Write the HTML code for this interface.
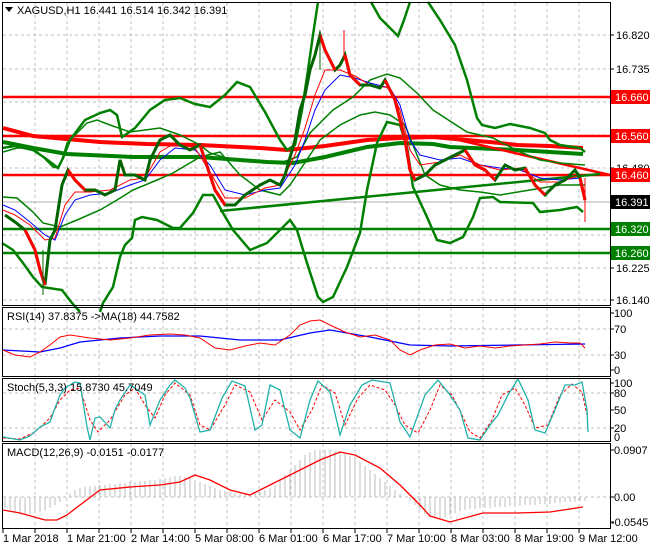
<!DOCTYPE html>
<html><head><meta charset="utf-8"><style>
html,body{margin:0;padding:0;background:#fff;width:650px;height:550px;overflow:hidden}
svg{display:block;font-family:"Liberation Sans",sans-serif;font-size:11px}
</style></head><body>
<svg width="650" height="550" viewBox="0 0 650 550" xmlns="http://www.w3.org/2000/svg">
<rect width="650" height="550" fill="#fff"/>
<!-- grids -->
<g stroke="#c0c0c0" stroke-dasharray="3,3" stroke-width="1">
<path d="M35 3V305M67 3V305M99 3V305M131 3V305M163 3V305M195 3V305M227 3V305M259 3V305M291 3V305M323 3V305M355 3V305M387 3V305M419 3V305M451 3V305M483 3V305M515 3V305M547 3V305M579 3V305"/>
<path d="M3 35H610M3 69H610M3 102H610M3 135H610M3 168H610M3 235H610M3 268H610M3 300H610"/>
<path d="M35 308V376M67 308V376M99 308V376M131 308V376M163 308V376M195 308V376M227 308V376M259 308V376M291 308V376M323 308V376M355 308V376M387 308V376M419 308V376M451 308V376M483 308V376M515 308V376M547 308V376M579 308V376M3 329H610M3 355H610"/>
<path d="M35 379V441M67 379V441M99 379V441M131 379V441M163 379V441M195 379V441M227 379V441M259 379V441M291 379V441M323 379V441M355 379V441M387 379V441M419 379V441M451 379V441M483 379V441M515 379V441M547 379V441M579 379V441M3 393H610M3 428H610"/>
<path d="M35 444V528M67 444V528M99 444V528M131 444V528M163 444V528M195 444V528M227 444V528M259 444V528M291 444V528M323 444V528M355 444V528M387 444V528M419 444V528M451 444V528M483 444V528M515 444V528M547 444V528M579 444V528M3 497H610"/>
</g>
<line x1="3" y1="202" x2="610" y2="202" stroke="#b0b0b0"/>
<!-- horizontal levels -->
<g stroke-width="2.5">
<line x1="3" y1="97" x2="610" y2="97" stroke="#ff0000"/>
<line x1="3" y1="136" x2="610" y2="136" stroke="#ff0000"/>
<line x1="3" y1="175" x2="610" y2="175" stroke="#ff0000"/>
<line x1="3" y1="229" x2="610" y2="229" stroke="#008000"/>
<line x1="3" y1="253" x2="610" y2="253" stroke="#008000"/>
</g>
<!-- thick MAs -->
<polyline fill="none" stroke="#ff0000" stroke-width="4" points="3,128 33,136 100,142 147,144 200,145 260,148 287,150 325,146 367,140 400,138 433,137 467,140 500,143 517,145 550,146 583,148"/>
<polyline fill="none" stroke="#008000" stroke-width="4" points="3,142 33,148 67,154 133,157 200,157 267,162 293,163 325,157 367,147 400,143 433,144 450,147 517,150 583,154"/>
<!-- trend lines -->
<line x1="450" y1="138" x2="610" y2="175" stroke="#ff0000" stroke-width="2.5"/>
<line x1="220" y1="211" x2="600" y2="174" stroke="#008000" stroke-width="2.5"/>
<!-- bollinger wide -->
<g fill="none" stroke="#008000" stroke-width="2.5">
<polyline points="2,148 15,146 33,150 45,158 58,168 63,158 70,140 85,120 100,113 110,110 117,115 122,137 128,133 135,128 150,110 165,100 180,98 195,104 210,107 225,95 237,82 250,87 265,112 280,140 287,150 295,145 302,110 308,70 313,35 318,2"/>
<polyline points="371,2 380,18 392,30 398,36 404,20 410,2"/>
<polyline points="428,2 440,20 455,45 467,80 477,118 482,125 495,128 510,124 530,128 545,133 550,140 560,145 580,148 585,152"/>
<polyline points="2,243 13,250 23,263 33,277 42,287 62,290 72,303 80,312"/>
<polyline points="100,312 103,303 113,287 120,257 125,245 132,238 135,220 142,217 157,220 173,228 180,228 193,213 203,195 213,195 223,213 233,230 250,250 267,243 290,220 297,230 307,263 318,297 323,302 333,297 347,267 360,233 367,190 377,143 387,122 400,125 407,147 413,187 427,217 437,240 450,243 463,237 473,217 480,198 493,197 500,202 533,203 540,212 560,210 577,207 583,212"/>
</g>
<!-- bollinger narrow -->
<g fill="none" stroke="#008000" stroke-width="1.5">
<polyline points="3,152 17,148 33,148 43,157 53,167 58,168 62,160 67,143 77,133 87,123 97,120 110,125 130,132 160,128 180,135 200,145 210,153 233,160 280,163 297,157 310,133 333,110 353,97 370,80 387,74 400,78 417,93 433,110 453,123 467,132 493,138 520,152 540,160 560,163 585,165"/>
<polyline points="3,197 17,198 33,212 43,223 60,227 77,220 100,210 117,200 133,190 157,180 173,173 200,157 220,152 240,175 260,190 280,195 290,185 300,170 320,140 340,125 360,115 375,112 390,115 405,125 415,150 425,175 440,185 460,190 480,192 500,195 530,190 560,185 585,185"/>
</g>
<!-- thin MAs -->
<polyline fill="none" stroke="#0000ff" stroke-width="1" points="3,205 15,210 30,222 45,235 55,240 65,215 75,200 90,195 110,193 130,185 145,180 160,160 175,148 195,150 210,165 225,190 245,195 265,190 280,188 295,165 305,140 315,110 325,90 340,75 355,78 370,83 390,88 400,105 410,140 420,155 440,160 460,158 480,165 500,168 520,170 540,178 560,180 580,178"/>
<polyline fill="none" stroke="#ff0000" stroke-width="1" points="3,210 15,215 30,225 45,240 55,238 65,205 75,192 90,192 110,190 130,180 145,178 160,152 175,143 195,148 210,172 225,198 245,198 265,188 280,185 295,155 305,128 315,95 325,70 340,70 355,76 370,85 390,88 400,110 410,150 420,165 440,162 460,155 480,165 500,170 520,168 540,182 560,182 580,175"/>
<!-- price -->
<polyline fill="none" stroke="#006400" stroke-width="3" points="5,215 15,222 25,230 35,250 40,270 45,285 50,240 55,230 62,185 68,170 75,180 85,190 95,190 105,195 115,190 120,160 125,175 135,175 145,180 150,160 160,140 170,135 180,145 190,150 200,145 205,160 215,190 225,205 235,205 245,195 260,185 270,180 280,185 285,175 295,140 300,110 305,95 310,70 315,55 320,35 325,50 330,60 335,70 340,65 345,55 350,75 360,85 370,85 380,88 385,80 390,90 395,100 400,120 405,140 410,170 415,180 425,175 435,165 445,160 455,155 465,150 475,165 485,170 495,180 505,165 515,170 525,168 535,185 545,195 555,185 565,180 575,170 580,178 585,200"/>
<g fill="none" stroke="#ff0000" stroke-width="3">
<polyline points="25,230 35,250 40,270 45,285"/>
<polyline points="68,170 75,180 85,190"/>
<polyline points="200,145 205,160 215,190 225,205"/>
<polyline points="320,35 325,50 330,60 335,70"/>
<polyline points="345,55 350,75 360,85"/>
<polyline points="385,80 390,90 395,100 400,120 405,140 410,170 415,180"/>
<polyline points="465,150 475,165 485,170 495,180"/>
<polyline points="525,168 535,185 545,195"/>
<polyline points="580,178 585,200"/>
</g>
<line x1="585" y1="178" x2="585" y2="222" stroke="#ff0000" stroke-width="1"/>
<line x1="320" y1="30" x2="320" y2="70" stroke="#006400" stroke-width="1"/>
<line x1="344" y1="30" x2="344" y2="60" stroke="#ff0000" stroke-width="1"/>
<line x1="43" y1="250" x2="43" y2="295" stroke="#006400" stroke-width="1"/>
<!-- RSI -->
<polyline fill="none" stroke="#0000ff" stroke-width="1.3" points="3,350 40,352 60,348 80,342 120,338 160,336 200,336 240,340 280,340 310,333 330,330 370,337 410,345 450,346 585,344"/>
<polyline fill="none" stroke="#ff0000" stroke-width="1" points="3,350 15,355 30,357 40,352 50,345 60,337 70,335 90,338 110,340 130,338 150,335 170,334 185,335 200,338 215,348 230,350 245,346 260,343 275,345 290,335 300,325 310,321 320,320 330,325 345,332 360,337 375,335 390,340 400,350 410,355 420,350 435,345 450,344 465,348 480,346 495,348 510,346 525,345 540,344 555,342 570,343 580,343 585,348"/>
<!-- Stoch -->
<polyline fill="none" stroke="#ff0000" stroke-width="1" stroke-dasharray="3,2" points="3,438 20,439 35,432 50,418 60,400 70,390 80,388 90,420 98,432 110,420 125,395 135,388 145,405 155,418 165,395 175,383 190,395 200,425 210,430 225,405 235,385 250,392 262,420 275,400 290,412 300,430 312,410 322,385 335,393 345,425 358,398 370,385 385,390 395,405 405,425 418,433 430,410 440,385 452,395 462,415 470,432 480,438 492,420 502,395 515,388 525,405 535,428 548,425 560,395 572,384 582,392 587,415"/>
<polyline fill="none" stroke="#20b2aa" stroke-width="1.3" points="3,437 20,440 30,436 40,427 50,422 55,408 60,395 65,388 75,382 80,383 87,427 90,440 95,418 100,417 110,428 115,410 120,400 130,385 145,395 150,425 160,400 170,385 175,380 185,388 190,398 200,432 210,430 222,398 232,381 245,386 255,430 262,425 270,385 280,390 290,430 300,438 310,400 318,381 330,392 340,435 350,405 362,385 372,380 390,383 400,422 410,437 425,395 438,380 450,395 460,410 468,438 480,440 490,425 498,415 508,395 518,379 528,400 535,430 545,433 555,410 565,385 575,385 582,382 587,410 588,432"/>
<!-- MACD -->
<path stroke="#bdbdbd" stroke-width="1" fill="none" d="M5 497V508M10 497V510M15 497V512M20 497V513M25 497V514M30 497V514M35 497V513M40 497V512M45 497V511M50 497V508M55 497V505M60 497V502M65 497V498M70 497V494M75 497V490M80 497V488M85 497V487M90 497V486M95 497V486M100 497V485M105 497V485M110 497V484M115 497V484M120 497V483M125 497V483M130 497V482M135 497V482M140 497V481M145 497V481M150 497V480M155 497V480M160 497V479M165 497V478M170 497V477M175 497V476M180 497V476M185 497V477M190 497V478M195 497V480M200 497V482M205 497V484M210 497V486M215 497V488M220 497V490M225 497V491M230 497V492M235 497V493M240 497V494M245 497V494M250 497V494M255 497V493M260 497V492M265 497V490M270 497V488M275 497V485M280 497V480M285 497V475M290 497V470M295 497V465M300 497V460M305 497V455M310 497V452M315 497V450M320 497V450M325 497V450M330 497V450M335 497V451M340 497V452M345 497V454M350 497V456M355 497V459M360 497V462M365 497V466M370 497V470M375 497V474M380 497V478M385 497V482M390 497V486M395 497V490M400 497V494M410 497V501M415 497V505M420 497V510M425 497V514M430 497V517M435 497V518M440 497V518M445 497V517M450 497V515M455 497V513M460 497V511M465 497V510M470 497V509M475 497V509M480 497V508M485 497V508M490 497V508M495 497V507M500 497V507M505 497V507M510 497V506M515 497V506M520 497V506M525 497V505M530 497V505M535 497V505M540 497V504M545 497V504M550 497V504M555 497V503M560 497V503M565 497V502M570 497V502M575 497V502M580 497V501M585 497V501"/>
<polyline fill="none" stroke="#ff0000" stroke-width="1.3" points="3,510 20,513 45,520 57,520 67,515 80,505 100,490 130,487 160,485 180,482 195,475 210,480 230,490 250,495 270,485 300,470 320,460 340,452 355,455 380,468 400,485 420,505 430,516 450,522 483,513 517,513 550,512 583,507"/>
<!-- frames -->
<g fill="none" stroke="#000" stroke-width="1">
<rect x="2.5" y="2.5" width="608" height="303"/>
<rect x="2.5" y="307.5" width="608" height="69"/>
<rect x="2.5" y="378.5" width="608" height="63"/>
<rect x="2.5" y="443.5" width="608" height="85"/>
<path d="M35 529v4M67 529v4M99 529v4M131 529v4M163 529v4M195 529v4M227 529v4M259 529v4M291 529v4M323 529v4M355 529v4M387 529v4M419 529v4M451 529v4M483 529v4M515 529v4M547 529v4M579 529v4M3 529v4"/>
<path d="M611 35h3M611 69h3M611 168h3M611 268h3M611 300h3M611 313h3M611 329h3M611 355h3M611 370h3M611 383h3M611 393h3M611 410h3M611 428h3M611 450h3M611 497h3M611 522h3"/>
</g>
<!-- labels -->
<g fill="#000">
<path d="M5 7h8l-4 5z"/>
<text x="17" y="14">XAGUSD,H1  16.441 16.514 16.342 16.391</text>
<text x="616" y="39">16.820</text>
<text x="616" y="73">16.735</text>
<text x="616" y="172">16.480</text>
<text x="616" y="272">16.225</text>
<text x="616" y="304">16.140</text>
<text x="7" y="320">RSI(14) 37.8375  -&gt;MA(18) 44.7582</text>
<text x="614" y="317">100</text><text x="614" y="333">70</text><text x="614" y="359">30</text><text x="614" y="374">0</text>
<text x="7" y="391">Stoch(5,3,3) 15.8730 45.7049</text>
<text x="614" y="387">100</text><text x="614" y="397">80</text><text x="614" y="414">50</text><text x="614" y="432">20</text><text x="614" y="441">0</text>
<text x="7" y="456">MACD(12,26,9) -0.0151 -0.0177</text>
<text x="614" y="454">0.0907</text><text x="614" y="501">0.00</text><text x="611" y="526">-0.0545</text>
<text x="3" y="542">1 Mar 2018</text><text x="67" y="542">1 Mar 21:00</text><text x="131" y="542">2 Mar 14:00</text><text x="195" y="542">5 Mar 08:00</text><text x="259" y="542">6 Mar 01:00</text><text x="323" y="542">6 Mar 17:00</text><text x="387" y="542">7 Mar 10:00</text><text x="451" y="542">8 Mar 03:00</text><text x="515" y="542">8 Mar 19:00</text><text x="579" y="542">9 Mar 12:00</text>
</g>
<g>
<rect x="611" y="90" width="39" height="14" fill="#ff0000"/><text x="615" y="101" fill="#fff">16.660</text>
<rect x="611" y="129" width="39" height="14" fill="#ff0000"/><text x="615" y="140" fill="#fff">16.560</text>
<rect x="611" y="168" width="39" height="14" fill="#ff0000"/><text x="615" y="179" fill="#fff">16.460</text>
<rect x="611" y="195" width="39" height="14" fill="#000"/><text x="615" y="206" fill="#fff">16.391</text>
<rect x="611" y="222" width="39" height="14" fill="#008000"/><text x="615" y="233" fill="#fff">16.320</text>
<rect x="611" y="246" width="39" height="14" fill="#008000"/><text x="615" y="257" fill="#fff">16.260</text>
</g>
</svg>
</body></html>
